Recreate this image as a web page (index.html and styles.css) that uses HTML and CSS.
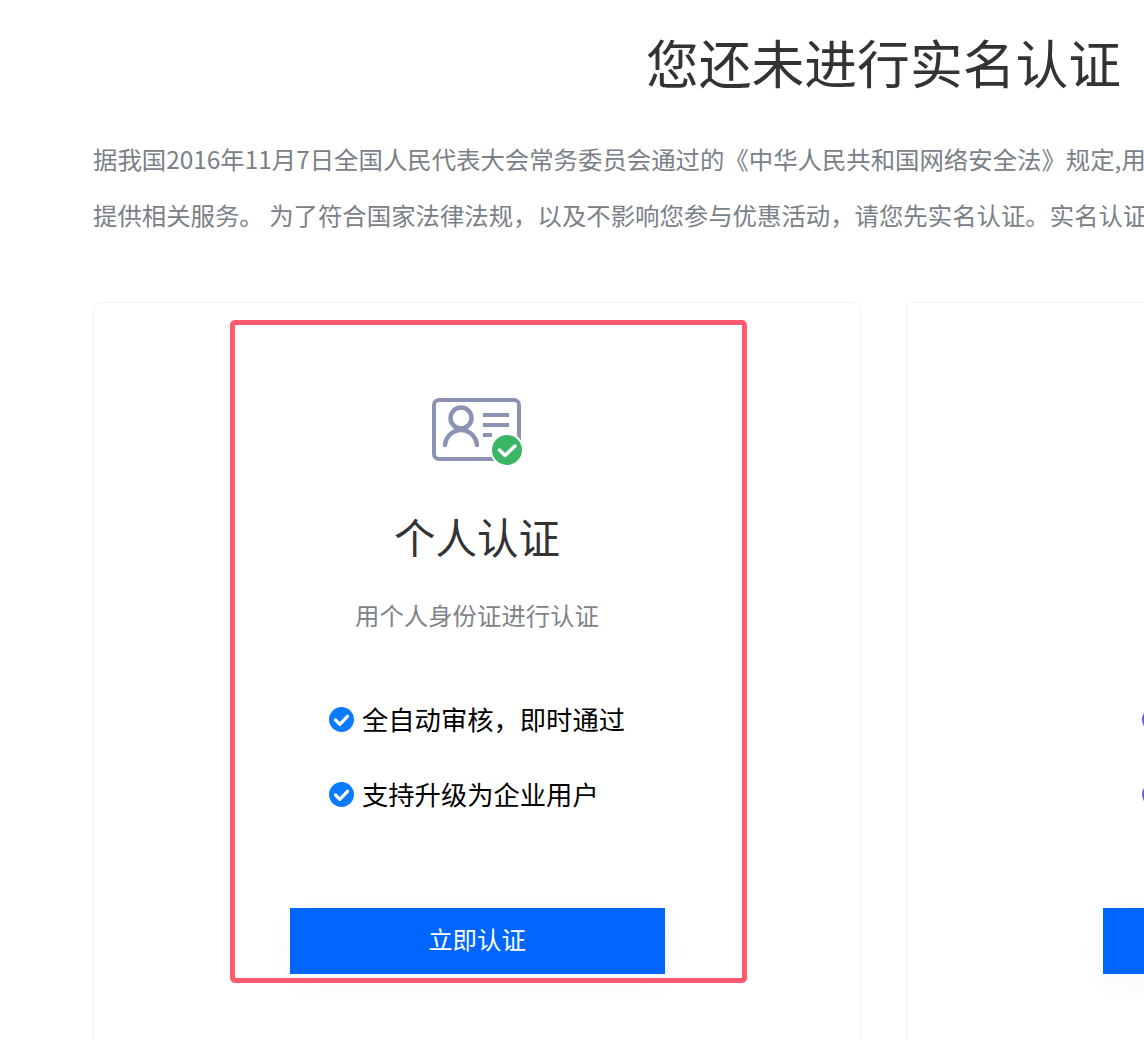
FILE: index.html
```html
<!DOCTYPE html>
<html lang="zh-CN">
<head>
    <meta charset="UTF-8">
    <meta name="viewport" content="width=device-width, initial-scale=1.0">
    <title>实名认证</title>
    <link rel="stylesheet" href="styles.css">
</head>
<body>
    <div class="page">
        <h1 class="page-title">您还未进行实名认证</h1>
        <p class="intro">据我国2016年11月7日全国人民代表大会常务委员会通过的《中华人民共和国网络安全法》规定,用户在使用网络服务时需提供真实身份信息，否则网络运营者不得为其<br>提供相关服务。 为了符合国家法律法规，以及不影响您参与优惠活动，请您先实名认证。实名认证通过后即可享受全部服务。</p>

        <div class="card-row">
            <div class="card">
                <div class="highlight"></div>
                <svg class="card-icon" width="95" height="70" viewBox="0 0 95 70">
                    <rect x="4" y="5" width="85" height="59" rx="5" fill="none" stroke="#8c92b3" stroke-width="4"/>
                    <circle cx="31" cy="23" r="10.500" fill="none" stroke="#8c92b3" stroke-width="4.500"/>
                    <path d="M15 50c1-9 8-15 16-15s15 6 16 15" fill="none" stroke="#8c92b3" stroke-width="4.500" stroke-linecap="round"/>
                    <path d="M53 20h26M53 30h26M53 40h9" fill="none" stroke="#8c92b3" stroke-width="4"/>
                    <circle cx="77" cy="55" r="17" fill="#fff"/>
                    <circle cx="77" cy="55" r="15" fill="#3bb566"/>
                    <path d="M69.500 55l5.500 5.500 10-9.500" fill="none" stroke="#fff" stroke-width="3.500" stroke-linecap="round" stroke-linejoin="round"/>
                </svg>
                <h2 class="card-title">个人认证</h2>
                <div class="card-sub">用个人身份证进行认证</div>
                <ul class="perks">
                    <li class="perk">
                        <svg class="perk-icon" width="25" height="25" viewBox="0 0 25 25"><circle cx="12.500" cy="12.500" r="12.500" fill="#0a7bff"/><path d="M6.500 13l4.300 4.300 7.700-8" fill="none" stroke="#fff" stroke-width="3.200" stroke-linecap="round" stroke-linejoin="round"/></svg>
                        <span>全自动审核，即时通过</span>
                    </li>
                    <li class="perk">
                        <svg class="perk-icon" width="25" height="25" viewBox="0 0 25 25"><circle cx="12.500" cy="12.500" r="12.500" fill="#0a7bff"/><path d="M6.500 13l4.300 4.300 7.700-8" fill="none" stroke="#fff" stroke-width="3.200" stroke-linecap="round" stroke-linejoin="round"/></svg>
                        <span>支持升级为企业用户</span>
                    </li>
                </ul>
                <button class="card-button">立即认证</button>
            </div>

            <div class="card">
                <svg class="card-icon" width="95" height="70" viewBox="0 0 95 70"></svg>
                <h2 class="card-title">企业认证</h2>
                <div class="card-sub">用企业资质进行认证</div>
                <ul class="perks">
                    <li class="perk">
                        <svg class="perk-icon" width="25" height="25" viewBox="0 0 25 25"><circle cx="12.500" cy="12.500" r="12.500" fill="#6f5bd0"/><path d="M6.500 13l4.300 4.300 7.700-8" fill="none" stroke="#fff" stroke-width="3.200" stroke-linecap="round" stroke-linejoin="round"/></svg>
                        <span>人工审核，享更多权益</span>
                    </li>
                    <li class="perk">
                        <svg class="perk-icon" width="25" height="25" viewBox="0 0 25 25"><circle cx="12.500" cy="12.500" r="12.500" fill="#6f5bd0"/><path d="M6.500 13l4.300 4.300 7.700-8" fill="none" stroke="#fff" stroke-width="3.200" stroke-linecap="round" stroke-linejoin="round"/></svg>
                        <span>支持开具企业发票抬头</span>
                    </li>
                </ul>
                <button class="card-button">立即认证</button>
            </div>
        </div>
    </div>
</body>
</html>
```

FILE: styles.css
```css
html, body {
    margin: 0;
    height: 1040px;
    overflow: hidden;
    background: #fff;
}

body {
    font-family: "Noto Sans CJK SC", sans-serif;
}

.page {
    width: 1581px;
    margin-left: 93px;
}

.page-title {
    margin: 0;
    height: 131px;
    font-size: 52.8px;
    line-height: 123px;
    font-weight: 400;
    color: #333;
    text-align: center;
}

.intro {
    margin: 0;
    font-size: 24.4px;
    line-height: 56px;
    color: #7a8087;
    white-space: nowrap;
}

.card-row {
    display: flex;
    gap: 45px;
    margin-top: 59px;
}

.card {
    position: relative;
    box-sizing: border-box;
    width: 768px;
    padding: 92px 0 90px;
    display: flex;
    flex-direction: column;
    align-items: center;
    background: #fff;
    border: 1px solid #f0f1f3;
    border-radius: 8px;
}

/* red frame drawn over the first card */
.highlight {
    position: absolute;
    left: 136px;
    top: 17px;
    box-sizing: border-box;
    width: 517px;
    height: 663px;
    border: 5px solid #ff5a6e;
    border-radius: 5px;
}

.card-title {
    margin: 41px 0 0;
    font-size: 41.5px;
    line-height: 60px;
    font-weight: 400;
    color: #333;
}

.card-sub {
    margin-top: 29px;
    font-size: 24.4px;
    line-height: 40px;
    color: #7f8389;
}

.perks {
    list-style: none;
    margin: 64px 0 0;
    padding: 0;
    display: flex;
    flex-direction: column;
    gap: 35px;
}

.perk {
    display: flex;
    align-items: center;
    gap: 8px;
    font-size: 26.3px;
    line-height: 40px;
    color: #000;
}

.card-button {
    margin-top: 94px;
    padding: 0 0 5px;
    width: 375px;
    height: 66px;
    border: none;
    background: #0066ff;
    color: #fff;
    font-family: inherit;
    font-size: 24.4px;
    box-shadow: 0 8px 30px rgba(0, 60, 120, 0.03);
}
```
